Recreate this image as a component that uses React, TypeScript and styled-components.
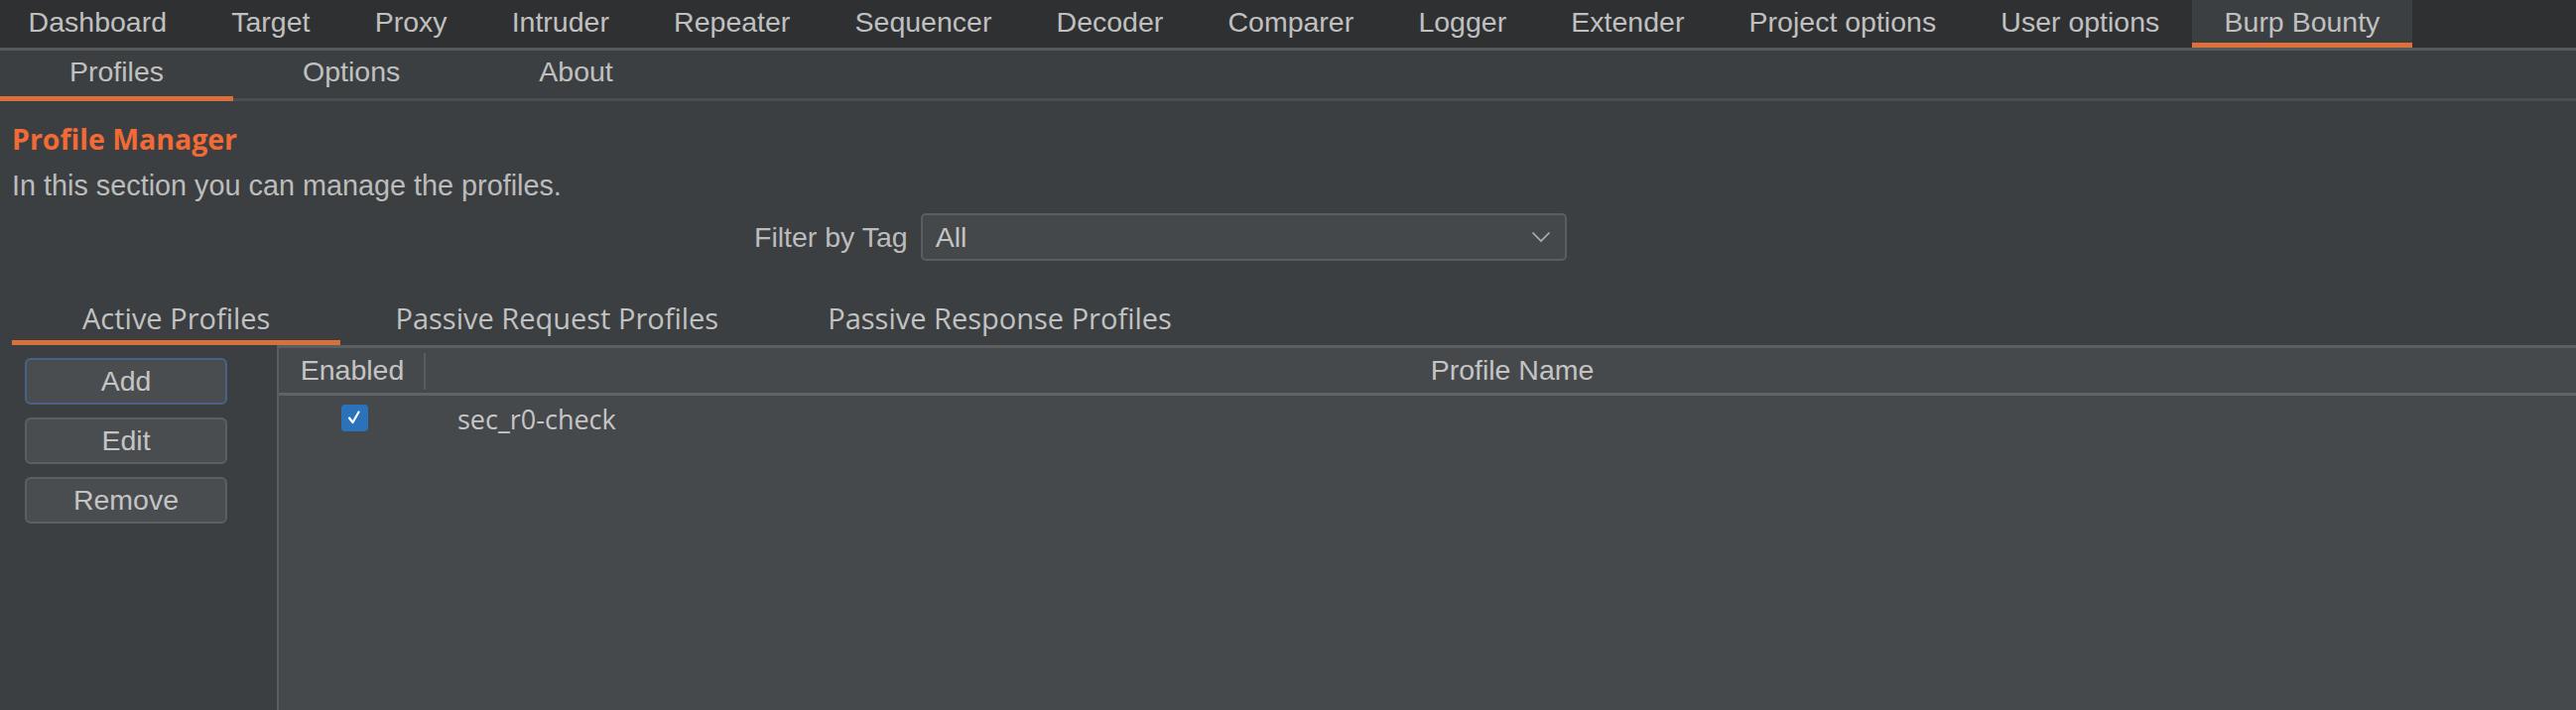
import styled, { createGlobalStyle } from "styled-components";

const GlobalStyle = createGlobalStyle`
    html, body {
        margin: 0;
        padding: 0;
        background-color: #3c3f41;
        overflow: hidden;
    }
    * {
        box-sizing: border-box;
    }
`;

const Wrapper = styled.div`
    width: 2596px;
    height: 716px;
    display: flex;
    flex-direction: column;
    background-color: #3c3f41;
    color: #bbbbbb;
    font-family: "Liberation Sans", Arial, sans-serif;
    font-size: 28.5px;
`;

const TopBar = styled.div`
    display: flex;
    height: 51px;
    background-color: #2f3032;
    border-bottom: 3px solid #56585a;
    padding-left: 0;
    overflow: hidden;
`;

const TopTab = styled.div<{ $active?: boolean }>`
    display: flex;
    align-items: center;
    height: 48px;
    padding: 0 32.6px 4px;
    white-space: nowrap;
    color: #c0c0c0;
    background-color: ${(p) => (p.$active ? "#3c3f41" : "transparent")};
    box-shadow: ${(p) => (p.$active ? "inset 0 -5px 0 #e0703a" : "none")};
    &:first-child {
        margin-left: -4px;
    }
`;

const SubBar = styled.div`
    display: flex;
    height: 51px;
    border-bottom: 3px solid #4b4e50;
`;

const SubTab = styled.div<{ $active?: boolean }>`
    display: flex;
    align-items: center;
    justify-content: center;
    padding: 0 70px 3px;
    height: 51px;
    margin-bottom: -3px;
    color: #c0c0c0;
    border-bottom: 5px solid ${(p) => (p.$active ? "#d9703a" : "transparent")};
`;

const Content = styled.div`
    flex: 1;
    display: flex;
    flex-direction: column;
    padding-left: 12px;
    min-height: 0;
`;

const Title = styled.div`
    margin-top: 20px;
    height: 36px;
    line-height: 36px;
    font-family: "Open Sans", "Noto Sans", sans-serif;
    font-weight: 700;
    font-size: 28.5px;
    color: #f26a35;
`;

const Description = styled.div`
    margin-top: 11px;
    height: 36px;
    line-height: 36px;
    font-size: 28.8px;
    color: #bcbcbc;
`;

const FilterRow = styled.div`
    display: flex;
    align-items: center;
    gap: 13px;
    margin-top: 10px;
    padding-left: 748px;
`;

const FilterLabel = styled.span`
    color: #bcbcbc;
`;

const Combo = styled.div`
    display: flex;
    align-items: center;
    justify-content: space-between;
    width: 651px;
    height: 48px;
    padding: 0 14px 0 13px;
    background-color: #45484a;
    border: 2px solid #5b5e60;
    border-radius: 5px;
    color: #c4c4c4;
`;

const TabRow = styled.div`
    display: flex;
    margin-top: 32px;
    height: 53px;
    font-family: "Open Sans", "Noto Sans", sans-serif;
    font-size: 29px;
`;

const InnerTab = styled.div<{ $active?: boolean; $pad: number }>`
    display: flex;
    align-items: center;
    padding: 3px ${(p) => p.$pad}px 0;
    color: #c2c2c2;
    border-bottom: 5px solid ${(p) => (p.$active ? "#d9703a" : "transparent")};
    white-space: nowrap;
`;

const Body = styled.div`
    flex: 1;
    display: flex;
    min-height: 0;
    margin-left: -12px;
`;

const ButtonPanel = styled.div`
    width: 279px;
    display: flex;
    flex-direction: column;
    gap: 13px;
    padding: 11px 0 0 25px;
    border-top: 2px solid #3c3f41;
`;

const Button = styled.div<{ $focused?: boolean }>`
    width: 204px;
    height: 47px;
    display: flex;
    align-items: center;
    justify-content: center;
    background-color: #4a4d4f;
    border: 2px solid ${(p) => (p.$focused ? "#4a6289" : "#5c5f61")};
    border-radius: 6px;
    color: #c4c4c4;
`;

const Table = styled.div`
    flex: 1;
    display: flex;
    flex-direction: column;
    background-color: #46494b;
    border-left: 2px solid #5a5d5f;
    border-top: 3px solid #5c5f61;
`;

const HeaderRow = styled.div`
    display: flex;
    height: 48px;
    border-bottom: 3px solid #606365;
`;

const HeaderCell = styled.div<{ $width?: number; $divider?: boolean }>`
    display: flex;
    align-items: center;
    justify-content: center;
    ${(p) => (p.$width ? `width: ${p.$width}px;` : "flex: 1; padding-left: 23px;")}
    color: #c4c4c4;
    position: relative;
    ${(p) =>
        p.$divider
            ? `&::after {
        content: "";
        position: absolute;
        right: 0;
        top: 5px;
        bottom: 3px;
        width: 2px;
        background-color: #5a5d5f;
    }`
            : ""}
`;

const Row = styled.div`
    display: flex;
    height: 46px;
    align-items: center;
`;

const CheckCell = styled.div`
    width: 148px;
    display: flex;
    justify-content: center;
`;

const CheckBox = styled.div`
    width: 27px;
    height: 27px;
    border-radius: 4px;
    background-color: #2a72ba;
    display: flex;
    align-items: center;
    justify-content: center;
    margin-top: -2px;
    margin-left: 4px;
    svg {
        width: 18px;
        height: 18px;
    }
`;

const NameCell = styled.div`
    flex: 1;
    padding-left: 32px;
    font-family: "Open Sans", "Noto Sans", sans-serif;
    font-size: 27px;
    color: #c6c6c6;
`;

const topTabs = [
    "Dashboard",
    "Target",
    "Proxy",
    "Intruder",
    "Repeater",
    "Sequencer",
    "Decoder",
    "Comparer",
    "Logger",
    "Extender",
    "Project options",
    "User options",
    "Burp Bounty",
];

export default function App() {
    return (
        <Wrapper>
            <GlobalStyle />
            <TopBar>
                {topTabs.map((t) => (
                    <TopTab key={t} $active={t === "Burp Bounty"}>
                        {t}
                    </TopTab>
                ))}
            </TopBar>
            <SubBar>
                <SubTab $active>Profiles</SubTab>
                <SubTab>Options</SubTab>
                <SubTab>About</SubTab>
            </SubBar>
            <Content>
                <Title>Profile Manager</Title>
                <Description>In this section you can manage the profiles.</Description>
                <FilterRow>
                    <FilterLabel>Filter by Tag</FilterLabel>
                    <Combo>
                        <span>All</span>
                        <svg width="20" height="12" viewBox="0 0 20 12" fill="none">
                            <path d="M1.5 1.5 L10 10 L18.5 1.5" stroke="#b0b0b0" strokeWidth="1.6" />
                        </svg>
                    </Combo>
                </FilterRow>
                <TabRow>
                    <InnerTab $active $pad={71}>Active Profiles</InnerTab>
                    <InnerTab $pad={55}>Passive Request Profiles</InnerTab>
                    <InnerTab $pad={55}>Passive Response Profiles</InnerTab>
                </TabRow>
                <Body>
                    <ButtonPanel>
                        <Button $focused>Add</Button>
                        <Button>Edit</Button>
                        <Button>Remove</Button>
                    </ButtonPanel>
                    <Table>
                        <HeaderRow>
                            <HeaderCell $width={148} $divider>Enabled</HeaderCell>
                            <HeaderCell>Profile Name</HeaderCell>
                        </HeaderRow>
                        <Row>
                            <CheckCell>
                                <CheckBox>
                                    <svg viewBox="0 0 18 18" fill="none">
                                        <path d="M4 9.5 L7.5 14 L13.5 3.5" stroke="#ffffff" strokeWidth="2.2" strokeLinecap="round" strokeLinejoin="round" />
                                    </svg>
                                </CheckBox>
                            </CheckCell>
                            <NameCell>sec_r0-check</NameCell>
                        </Row>
                    </Table>
                </Body>
            </Content>
        </Wrapper>
    );
}
